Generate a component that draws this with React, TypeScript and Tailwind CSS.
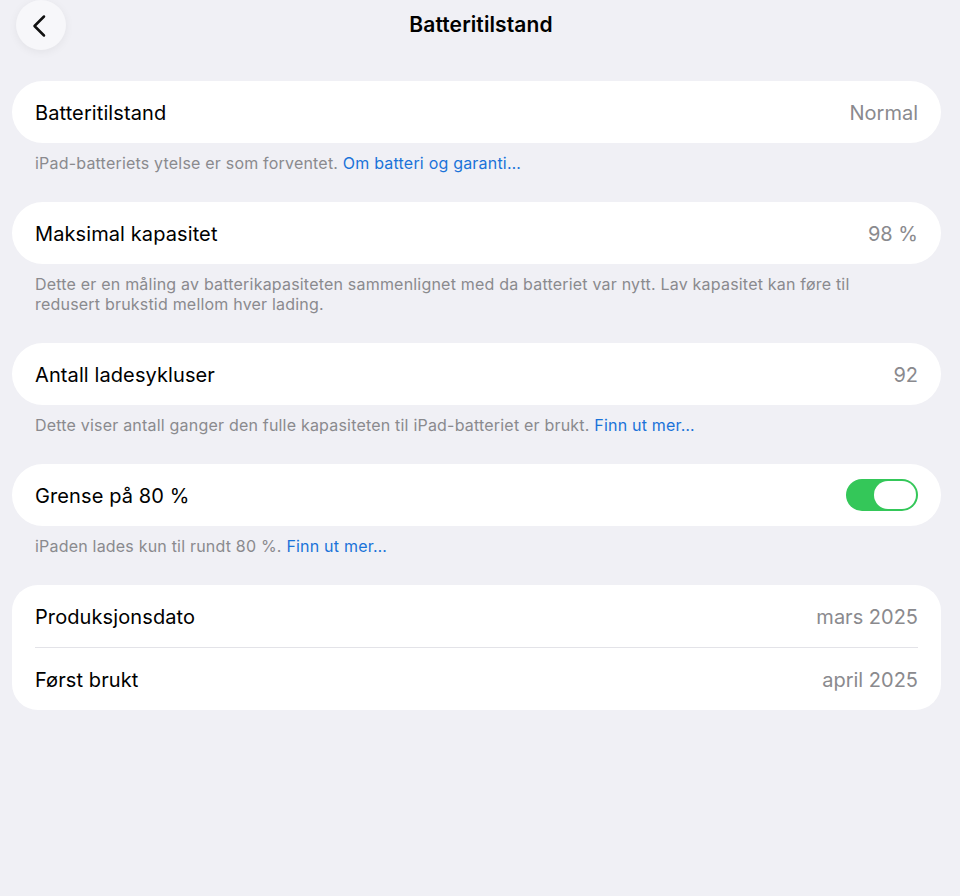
import React from "react";

const font = { fontFamily: 'Inter, "Noto Sans", "Liberation Sans", sans-serif' };

function Row({ label, value, children }: { label: string; value?: string; children?: React.ReactNode }) {
  return (
    <div className="flex h-[62px] items-center justify-between px-[23px]">
      <span className="mt-[1px] text-[20px] tracking-[0.1px] text-black">{label}</span>
      {value !== undefined ? <span className="mt-[1px] text-[20px] tracking-[0px] text-[#8a8a8e]">{value}</span> : children}
    </div>
  );
}

function Footer({ children }: { children: React.ReactNode }) {
  return (
    <div className="px-[23px] pt-[10px] pb-[29px] text-[16px] leading-[20px] text-[#8a8a8e] tracking-[0.2px]">{children}</div>
  );
}

function Link({ children }: { children: React.ReactNode }) {
  return <span className="text-[#1a73d9]">{children}</span>;
}

export default function App() {
  return (
    <div className="min-h-[896px] w-[960px] bg-[#f0f0f5]" style={font}>
      <div className="relative flex h-[50px] items-center justify-center">
        <div className="absolute left-[16px] top-0 flex h-[50px] w-[50px] items-center justify-center rounded-full bg-[#f7f7fa] shadow-[0_2px_10px_rgba(0,0,0,0.06)]">
          <svg width="24" height="24" viewBox="0 0 24 24" fill="none" className="ml-[-3px] mt-[2px]">
            <path d="M16 2.5 L6.5 12 L16 21.5" stroke="#111" strokeWidth="2.5" strokeLinecap="round" strokeLinejoin="round" />
          </svg>
        </div>
        <span className="ml-[2px] mt-[-1px] text-[21px] font-semibold tracking-[0.1px] text-black">Batteritilstand</span>
      </div>
      <div className="px-[12px] pr-[19px] pt-[31px]">
        <div className="rounded-[31px] bg-white">
          <Row label="Batteritilstand" value="Normal" />
        </div>
        <Footer>
          iPad-batteriets ytelse er som forventet. <Link>Om batteri og garanti…</Link>
        </Footer>

        <div className="rounded-[31px] bg-white">
          <Row label="Maksimal kapasitet" value="98 %" />
        </div>
        <Footer>
          Dette er en måling av batterikapasiteten sammenlignet med da batteriet var nytt. Lav kapasitet kan føre til redusert brukstid mellom hver lading.
        </Footer>

        <div className="rounded-[31px] bg-white">
          <Row label="Antall ladesykluser" value="92" />
        </div>
        <Footer>
          Dette viser antall ganger den fulle kapasiteten til iPad-batteriet er brukt. <Link>Finn ut mer…</Link>
        </Footer>

        <div className="rounded-[31px] bg-white">
          <Row label="Grense på 80 %">
            <div className="flex h-[32px] w-[72px] items-center justify-end rounded-full bg-[#34c759] p-[2px]">
              <div className="h-[28px] w-[42px] rounded-full bg-white" />
            </div>
          </Row>
        </div>
        <Footer>
          iPaden lades kun til rundt 80 %. <Link>Finn ut mer…</Link>
        </Footer>

        <div className="rounded-[26px] bg-white">
          <Row label="Produksjonsdato" value="mars 2025" />
          <div className="mx-[23px] h-px bg-[#e3e3e8]" />
          <Row label="Først brukt" value="april 2025" />
        </div>
      </div>
    </div>
  );
}
